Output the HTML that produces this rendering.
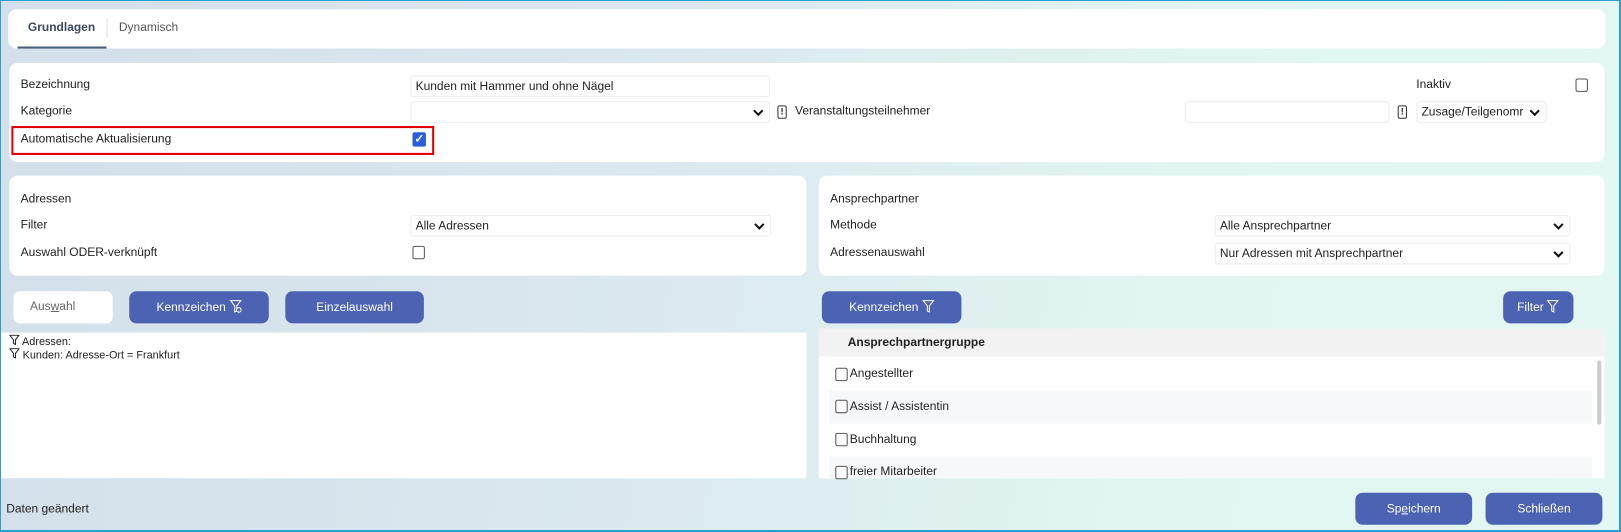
<!DOCTYPE html><html><head><meta charset="utf-8"><style>
*{box-sizing:border-box;margin:0;padding:0}
body{width:1621px;height:532px;overflow:hidden;font-family:"Liberation Sans",Arial,sans-serif;font-size:11.6px;color:#222;position:relative;background:linear-gradient(100deg,#d3dfea 0%,#dbe8ef 40%,#e2f5f1 70%,#e3f7f3 100%)}
.frame{position:absolute;left:0;top:0;width:1621px;height:532px;border:2px solid #2a9fd6;border-top-width:1px;border-left-width:1px;pointer-events:none;z-index:10}
#w{position:absolute;left:0;top:0;width:1568px;height:515px;transform:scale(1.0338,1.033);transform-origin:0 0}
.p{position:absolute;background:#fff;border-radius:8px}
.t{position:absolute;white-space:nowrap}
.in{position:absolute;background:#fff;border:1px solid #eceef0;border-radius:3px;padding-left:4px;line-height:19px}
.sel::after{content:"";position:absolute;right:7px;top:5px;width:5px;height:5px;border-right:2px solid #111;border-bottom:2px solid #111;transform:rotate(45deg)}
.cb{position:absolute;width:12px;height:13px;border:1px solid #555;border-radius:2px;background:#fff}
.btn{position:absolute;background:#4b63b2;color:#fff;border-radius:7px;text-align:center;line-height:31px;font-size:11.6px}
.ex{position:absolute;width:9px;height:13px;border:1px solid #333;border-radius:2px;font-size:9px;line-height:11px;text-align:center;font-weight:bold}
.row{position:absolute;left:802px;width:738px;height:32px}
</style></head><body>
<div class="frame"></div>
<div id="w">
<div class="p" style="left:8px;top:9px;width:1545px;height:38px"></div>
<div class="t" style="left:27px;top:20px;font-weight:bold;color:#3b4a5a">Grundlagen</div>
<div style="position:absolute;left:17px;top:45px;width:86px;height:2px;background:#4a5f78"></div>
<div style="position:absolute;left:103px;top:18px;width:1px;height:18px;background:#ddd"></div>
<div class="t" style="left:115px;top:20px;color:#555">Dynamisch</div>

<div class="p" style="left:9px;top:61px;width:1543px;height:96px"></div>
<div class="t" style="left:20px;top:75px">Bezeichnung</div>
<div class="in" style="left:397px;top:73px;width:348px;height:21px">Kunden mit Hammer und ohne Nägel</div>
<div class="t" style="left:20px;top:101px">Kategorie</div>
<div class="in sel" style="left:397px;top:98px;width:348px;height:21px"></div>
<div class="ex" style="left:752px;top:102px">!</div>
<div class="t" style="left:769px;top:101px">Veranstaltungsteilnehmer</div>
<div class="in" style="left:1146px;top:98px;width:198px;height:21px"></div>
<div class="ex" style="left:1352px;top:102px">!</div>
<div class="in sel" style="left:1370px;top:98px;width:126px;height:21px;overflow:hidden">Zusage/Teilgenomr</div>
<div class="t" style="left:1370px;top:75px">Inaktiv</div>
<div class="cb" style="left:1524px;top:76px"></div>
<div style="position:absolute;left:11px;top:122px;width:409px;height:28px;border:2px solid #e00000"></div>
<div class="t" style="left:20px;top:128px">Automatische Aktualisierung</div>
<div style="position:absolute;left:399px;top:128px;width:13px;height:14px;background:#2b5fd9;border-radius:2px;color:#fff;font-size:11px;line-height:14px;text-align:center;font-weight:bold">✓</div>

<div class="p" style="left:9px;top:170px;width:771px;height:97px"></div>
<div class="t" style="left:20px;top:186px">Adressen</div>
<div class="t" style="left:20px;top:211px">Filter</div>
<div class="in sel" style="left:397px;top:208px;width:349px;height:21px">Alle Adressen</div>
<div class="t" style="left:20px;top:238px">Auswahl ODER-verknüpft</div>
<div class="cb" style="left:399px;top:238px"></div>

<div class="p" style="left:792px;top:170px;width:760px;height:97px"></div>
<div class="t" style="left:803px;top:186px">Ansprechpartner</div>
<div class="t" style="left:803px;top:211px">Methode</div>
<div class="in sel" style="left:1175px;top:208px;width:344px;height:21px">Alle Ansprechpartner</div>
<div class="t" style="left:803px;top:238px">Adressenauswahl</div>
<div class="in sel" style="left:1175px;top:235px;width:344px;height:21px">Nur Adressen mit Ansprechpartner</div>

<div class="p" style="left:13px;top:282px;width:96px;height:31px;border-radius:6px"></div>
<div class="t" style="left:29px;top:290px;color:#666">Aus<u>w</u>ahl</div>
<div class="btn" style="left:125px;top:282px;width:135px;height:31px">Kennzeichen <svg width="12" height="13" viewBox="0 0 12 13" style="vertical-align:-2px"><path d="M1 1h10L7 6v5L5 12V6z" fill="none" stroke="#fff"/><circle cx="9" cy="10" r="2.2" fill="#4b63b2" stroke="#fff"/></svg></div>
<div class="btn" style="left:276px;top:282px;width:134px;height:31px">Einzelauswahl</div>
<div class="btn" style="left:795px;top:282px;width:135px;height:31px">Kennzeichen <svg width="12" height="13" viewBox="0 0 12 13" style="vertical-align:-2px"><path d="M1 1h10L7 6v6L5 11V6z" fill="none" stroke="#fff"/></svg></div>
<div class="btn" style="left:1454px;top:282px;width:68px;height:31px">Filter <svg width="12" height="13" viewBox="0 0 12 13" style="vertical-align:-2px"><path d="M1 1h10L7 6v6L5 11V6z" fill="none" stroke="#fff"/></svg></div>

<div style="position:absolute;left:1px;top:322px;width:779px;height:141px;background:#fff"></div>
<div class="t" style="left:9px;top:324px;font-size:10.5px"><svg width="10" height="10" viewBox="0 0 10 10"><path d="M.5 .5h9L6 5v4.5L4 8.5V5z" fill="none" stroke="#222"/></svg> Adressen:</div>
<div class="t" style="left:9px;top:337px;font-size:10.5px"><svg width="10" height="10" viewBox="0 0 10 10"><path d="M.5 .5h9L6 5v4.5L4 8.5V5z" fill="none" stroke="#222"/></svg> Kunden: Adresse-Ort = Frankfurt</div>

<div style="position:absolute;left:792px;top:318px;width:760px;height:145px;background:#fff;overflow:hidden">
<div style="position:absolute;left:0;top:0;width:760px;height:27px;background:#f2f2f2"></div>
<div class="t" style="left:28px;top:7px;font-weight:bold">Ansprechpartnergruppe</div>
</div>
<div class="row" style="top:346px"></div>
<div class="row" style="top:378px;background:#f6f8fa"></div>
<div class="row" style="top:410px"></div>
<div class="row" style="top:442px;height:21px;background:#f6f8fa"></div>
<div class="cb" style="left:808px;top:356px"></div><div class="t" style="left:822px;top:355px">Angestellter</div>
<div class="cb" style="left:808px;top:387px"></div><div class="t" style="left:822px;top:387px">Assist / Assistentin</div>
<div class="cb" style="left:808px;top:419px"></div><div class="t" style="left:822px;top:419px">Buchhaltung</div>
<div class="cb" style="left:808px;top:451px"></div><div class="t" style="left:822px;top:450px">freier Mitarbeiter</div>
<div style="position:absolute;left:1545px;top:349px;width:4px;height:62px;background:#ccc;border-radius:2px"></div>

<div class="t" style="left:6px;top:486px">Daten geändert</div>
<div class="btn" style="left:1311px;top:477px;width:113px;height:31px">Sp<u>e</u>ichern</div>
<div class="btn" style="left:1437px;top:477px;width:113px;height:31px">Schließen</div>
</div>
</body></html>
